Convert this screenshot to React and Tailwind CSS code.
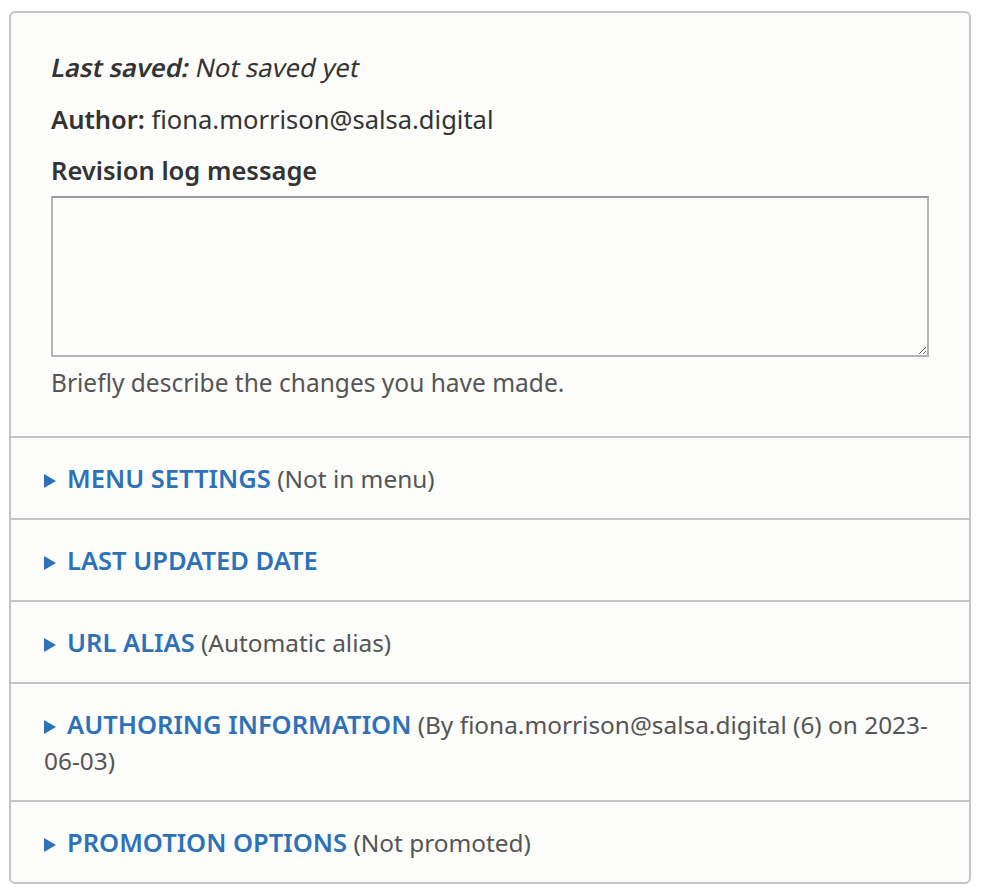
const rows = [
  { title: 'Menu settings', note: '(Not in menu)' },
  { title: 'Last updated date' },
  { title: 'URL alias', note: '(Automatic alias)' },
  { title: 'Authoring information', note: '(By fiona.morrison@salsa.digital (6) on 2023-06-03)' },
  { title: 'Promotion options', note: '(Not promoted)' },
];

function Arrow() {
  return (
    <svg width="12" height="14" viewBox="0 0 12 14" className="inline-block mr-[11px] align-[0px]">
      <path d="M0 0 L12 7 L0 14 Z" fill="#2d72b8" />
    </svg>
  );
}

export default function App() {
  return (
    <div className="min-h-screen bg-white pt-[11px] pl-[9px] font-['Noto_Sans',sans-serif] text-[#333333]">
      <div className="w-[962px] bg-[#fcfcfa] border-2 border-[#c4c4c4] rounded-[6px] overflow-hidden">
        {/* Revision info */}
        <div className="px-[40px] pt-[36px] pb-[37px] text-[25.5px] leading-[36px]">
          {/* slanted regular face, as the page shows it */}
          <p>
            <span className="inline-block -skew-x-12 origin-[0_75%] -ml-[1px]">
              <span className="font-semibold">Last saved:</span> Not saved yet
            </span>
          </p>
          <p className="mt-[16px]">
            <span className="font-semibold">Author:</span> fiona.morrison@salsa.digital
          </p>
          <label className="block mt-[15px] font-semibold">Revision log message</label>
          <textarea
            className="block mt-[8px] w-full h-[161px] bg-[#fcfcfa] border-2 border-[#b4b4b4] border-t-[#9a9a9a] outline-none"
          />
          <p className="mt-[10px] text-[24.5px] leading-[32px] text-[#555555]">
            Briefly describe the changes you have made.
          </p>
        </div>

        {rows.map(r => (
          <div key={r.title} className="border-t-2 border-[#c4c4c4] pl-[33px] pr-[30px] py-[22px] text-[25px] leading-[36px]">
            <Arrow />
            <span className="font-semibold uppercase text-[25.5px] leading-[28px] text-[#2d72b8]">{r.title}</span>
            {r.note && <span className="text-[24.4px] leading-[28px] text-[#555555]"> {r.note}</span>}
          </div>
        ))}
      </div>
    </div>
  );
}
